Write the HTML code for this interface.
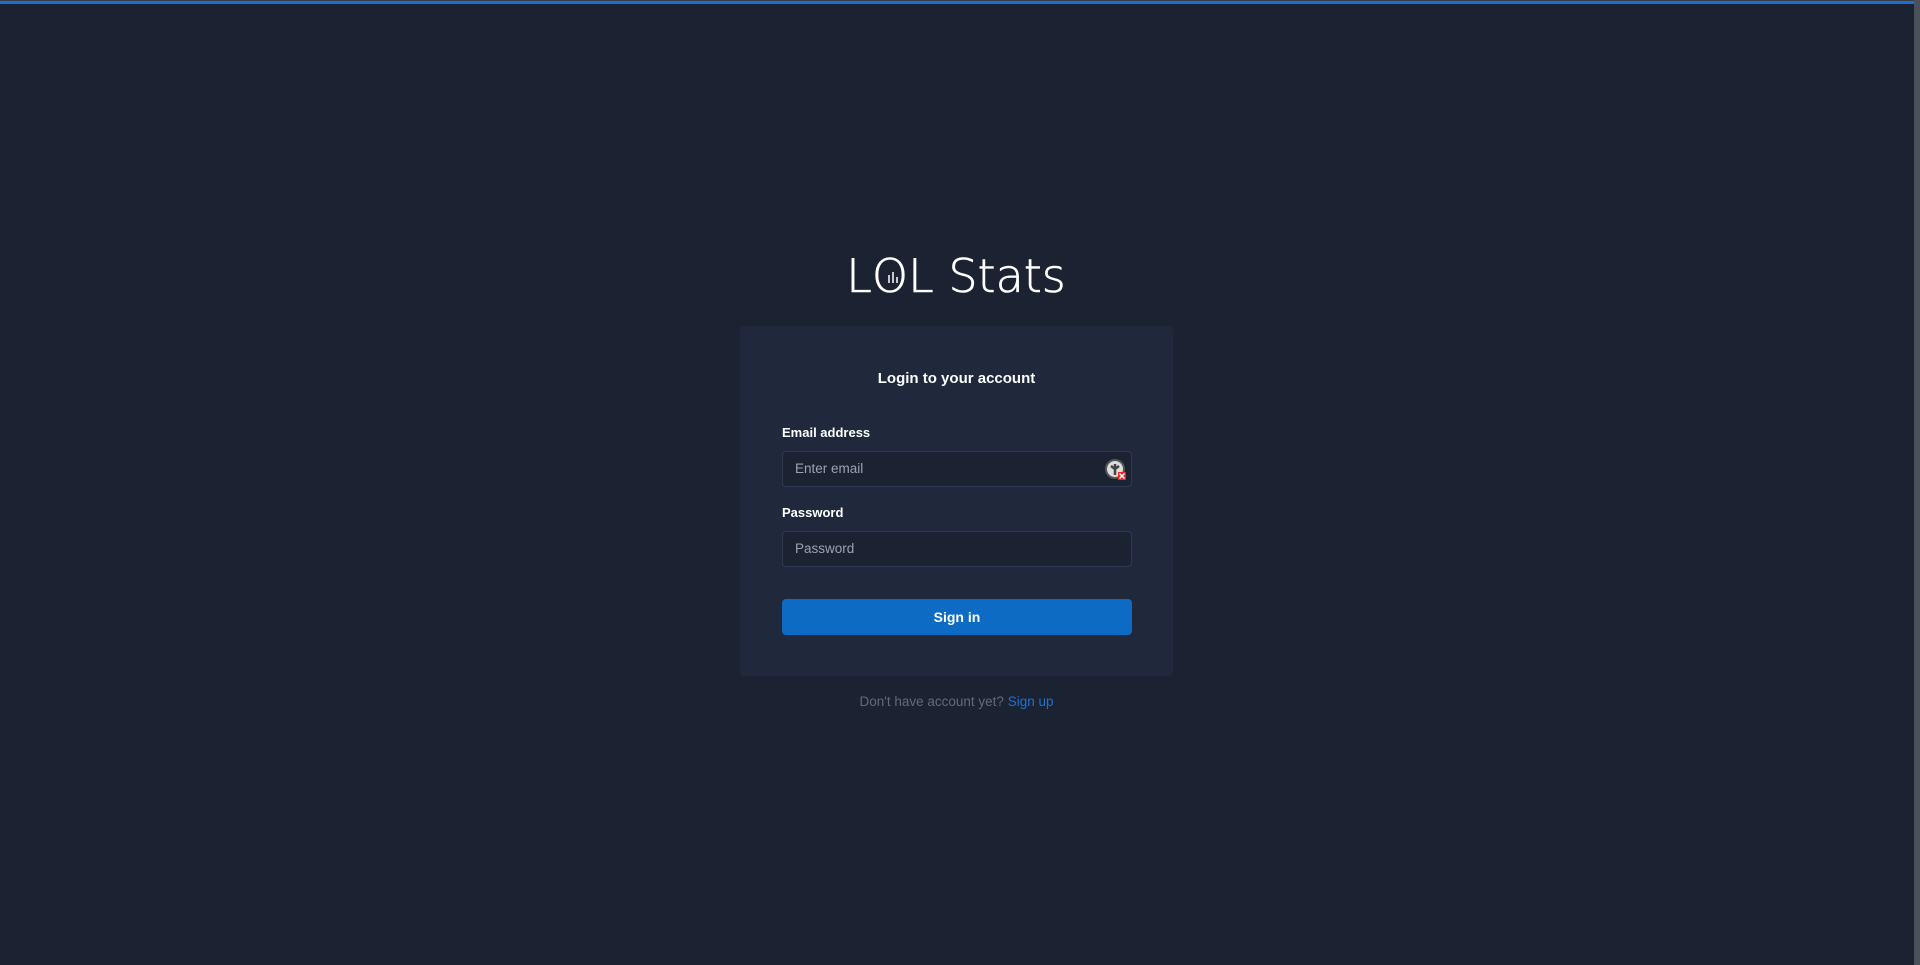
<!DOCTYPE html>
<html><head><meta charset="utf-8"><style>
html,body{margin:0;padding:0;width:1920px;height:965px;overflow:hidden;background:#1b2333;font-family:"Liberation Sans",sans-serif;}
.bar{position:absolute;left:0;top:0;width:1914px;height:4px;background:#1a6fcf;border-top:1px solid #3a3f46;box-sizing:border-box}
.sb{position:absolute;right:0;top:0;width:6px;height:965px;background:#4b515b}
.logo{position:absolute;left:656px;top:248px;width:600px;text-align:center;color:#fff;font-size:46px;white-space:nowrap;line-height:56px;font-family:"DejaVu Sans","Liberation Sans",sans-serif;font-weight:200;-webkit-text-stroke:0.6px #fff}
.card{position:absolute;left:740px;top:326px;width:433px;height:350px;background:#1f293b;border-radius:4px}
.t{position:absolute;left:740px;width:433px;top:370px;text-align:center;color:#fff;font-weight:bold;font-size:15px}
.lbl{position:absolute;left:782px;color:#fff;font-weight:bold;font-size:13px}
.inp{position:absolute;left:782px;width:350px;height:36px;box-sizing:border-box;border:1px solid #2d3b52;border-radius:4px;background:#1b2333;color:#9aa3b0;font-size:13.5px;padding-left:12px;line-height:34px}
.btn{position:absolute;left:782px;top:599px;width:350px;height:36px;background:#0e6bc4;border-radius:4px;color:#fff;font-weight:bold;font-size:14px;text-align:center;line-height:36px}
.su{position:absolute;left:740px;width:433px;top:694px;text-align:center;color:#5f6b7d;font-size:13.5px}
.su span{color:#1a73d4}
</style></head><body>
<div class="bar"></div><div class="sb"></div>
<div class="logo">L<span style="position:relative;display:inline-block">O<svg style="position:absolute;left:11px;top:20px" width="20" height="20" viewBox="0 0 20 20"><path d="M6 7v8M10 4v11M14 9v6" stroke="#fff" stroke-width="1.5"/></svg></span>L Stats</div>
<div class="card"></div>
<div class="t">Login to your account</div>
<div class="lbl" style="top:425px">Email address</div>
<div class="inp" style="top:451px">Enter email<svg style="position:absolute;right:4px;top:7px" width="22" height="22" viewBox="0 0 22 22"><circle cx="10" cy="10" r="9" fill="#ddd" stroke="#555" stroke-width="2"/><path d="M10 5v11M6 7l4 3 4-3" stroke="#444" stroke-width="2.5" fill="none"/><rect x="13" y="13" width="8" height="8" fill="#e22"/><path d="M14.5 14.5l5 5M19.5 14.5l-5 5" stroke="#fff" stroke-width="1.5"/></svg></div>
<div class="lbl" style="top:505px">Password</div>
<div class="inp" style="top:531px">Password</div>
<div class="btn">Sign in</div>
<div class="su">Don't have account yet? <span>Sign up</span></div>
</body></html>
